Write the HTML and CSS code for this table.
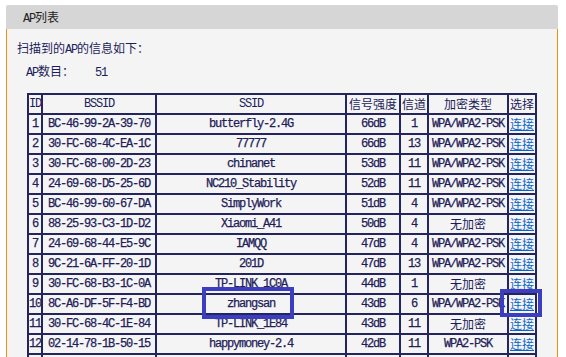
FILE: index.html
```html
<!DOCTYPE html>
<html lang="zh-CN">
<head>
<meta charset="utf-8">
<title>AP列表</title>
<link rel="stylesheet" href="styles.css">
</head>
<body>
<div class="panel">
  <div class="panel-head"><span class="lat">AP</span>列表</div>
  <div class="panel-body">
    <p class="intro">扫描到的<span class="lat">AP</span>的信息如下：</p>
    <p class="count"><span class="lat">AP</span>数目：<span class="lat num">51</span></p>
    <table class="ap-table">
      <colgroup>
        <col class="c-id"><col class="c-bssid"><col class="c-ssid"><col class="c-sig"><col class="c-ch"><col class="c-enc"><col class="c-sel">
      </colgroup>
      <thead>
        <tr><th class="lat">ID</th><th class="lat">BSSID</th><th class="lat">SSID</th><th>信号强度</th><th>信道</th><th>加密类型</th><th>选择</th></tr>
      </thead>
      <tbody>
        <tr><td>1</td><td>BC-46-99-2A-39-70</td><td>butterfly-2.4G</td><td>66dB</td><td>1</td><td>WPA/WPA2-PSK</td><td class="cn"><a href="#">连接</a></td></tr>
        <tr><td>2</td><td>30-FC-68-4C-EA-1C</td><td>77777</td><td>66dB</td><td>13</td><td>WPA/WPA2-PSK</td><td class="cn"><a href="#">连接</a></td></tr>
        <tr><td>3</td><td>30-FC-68-00-2D-23</td><td>chinanet</td><td>53dB</td><td>11</td><td>WPA/WPA2-PSK</td><td class="cn"><a href="#">连接</a></td></tr>
        <tr><td>4</td><td>24-69-68-D5-25-6D</td><td>NC210_Stability</td><td>52dB</td><td>11</td><td>WPA/WPA2-PSK</td><td class="cn"><a href="#">连接</a></td></tr>
        <tr><td>5</td><td>BC-46-99-60-67-DA</td><td>SimplyWork</td><td>51dB</td><td>4</td><td>WPA/WPA2-PSK</td><td class="cn"><a href="#">连接</a></td></tr>
        <tr><td>6</td><td>88-25-93-C3-1D-D2</td><td>Xiaomi_A41</td><td>50dB</td><td>4</td><td class="cn">无加密</td><td class="cn"><a href="#">连接</a></td></tr>
        <tr><td>7</td><td>24-69-68-44-E5-9C</td><td>IAMQQ</td><td>47dB</td><td>4</td><td>WPA/WPA2-PSK</td><td class="cn"><a href="#">连接</a></td></tr>
        <tr><td>8</td><td>9C-21-6A-FF-20-1D</td><td>201D</td><td>47dB</td><td>13</td><td>WPA/WPA2-PSK</td><td class="cn"><a href="#">连接</a></td></tr>
        <tr><td>9</td><td>30-FC-68-B3-1C-0A</td><td>TP-LINK_1C0A</td><td>44dB</td><td>1</td><td class="cn">无加密</td><td class="cn"><a href="#">连接</a></td></tr>
        <tr><td>10</td><td>8C-A6-DF-5F-F4-BD</td><td>zhangsan</td><td>43dB</td><td>6</td><td>WPA/WPA2-PSK</td><td class="cn"><a href="#">连接</a></td></tr>
        <tr><td>11</td><td>30-FC-68-4C-1E-84</td><td>TP-LINK_1E84</td><td>43dB</td><td>11</td><td class="cn">无加密</td><td class="cn"><a href="#">连接</a></td></tr>
        <tr><td>12</td><td>02-14-78-1B-50-15</td><td>happymoney-2.4</td><td>42dB</td><td>11</td><td>WPA2-PSK</td><td class="cn"><a href="#">连接</a></td></tr>
        <tr><td></td><td></td><td></td><td></td><td></td><td></td><td></td></tr>
      </tbody>
    </table>
  </div>
</div>
<div class="mark mark-ssid"></div>
<div class="mark mark-link"></div>
</body>
</html>
```
FILE: styles.css
```css
html, body {
  margin: 0;
  padding: 0;
  background: #ffffff;
  overflow: hidden;
}
body {
  font-family: "Noto Sans CJK SC", "Liberation Sans", sans-serif;
  font-size: 12px;
  color: #1c1c5a;
}
.lat {
  font-family: "Liberation Mono", "Noto Sans CJK SC", monospace;
  letter-spacing: -1.2px;
}
.panel {
  margin: 5px 0 0 6px;
  width: 552px;
}
.panel-head {
  height: 24px;
  line-height: 24px;
  background: #d6d6d6;
  border-radius: 2px 2px 0 0;
  padding-left: 17px;
  color: #222222;
}
.panel-body {
  background: #f4f4f4;
  border-left: 1px solid #f0900c;
  border-right: 1px solid #f0900c;
  padding: 11px 0 40px 0;
}
.intro {
  margin: 0 0 0 10px;
  line-height: 16px;
  height: 16px;
}
.count {
  margin: 7px 0 0 19px;
  line-height: 16px;
  height: 16px;
}
.count .num {
  margin-left: 21px;
}
.ap-table {
  margin: 14px 0 0 20px;
  border-collapse: collapse;
  table-layout: fixed;
  width: 510px;
  background: #f4f4f4;
}
.c-id { width: 14px; }
.c-bssid { width: 114px; }
.c-ssid { width: 190px; }
.c-sig { width: 54px; }
.c-ch { width: 28px; }
.c-enc { width: 80px; }
.c-sel { width: 28px; }
.ap-table th,
.ap-table td {
  border: 2px solid #24245e;
  padding: 0;
  height: 18px;
  line-height: 18px;
  text-align: center;
  white-space: nowrap;
  overflow: hidden;
  font-weight: normal;
  color: #1c1c5a;
}
.ap-table th {
  font-family: "Noto Sans CJK SC", sans-serif;
  font-size: 12px;
  letter-spacing: 0;
}
.ap-table th.lat {
  font-family: "Liberation Mono", monospace;
  letter-spacing: -1.2px;
}
.ap-table td {
  font-family: "Liberation Mono", "Noto Sans CJK SC", monospace;
  letter-spacing: -1.2px;
  color: #221c58;
  -webkit-text-stroke: 0.25px #221c58;
}
.ap-table td.cn {
  font-family: "Noto Sans CJK SC", sans-serif;
  letter-spacing: 0;
  color: #1c1c5a;
  -webkit-text-stroke: 0;
}
.ap-table a {
  color: #0a64cc;
  text-decoration: underline;
}
.mark {
  position: absolute;
  box-sizing: border-box;
  border: 4px solid #3d3dc0;
}
.mark-ssid {
  left: 202px;
  top: 287px;
  width: 92px;
  height: 32px;
}
.mark-link {
  left: 500px;
  top: 289px;
  width: 42px;
  height: 28px;
}
```
